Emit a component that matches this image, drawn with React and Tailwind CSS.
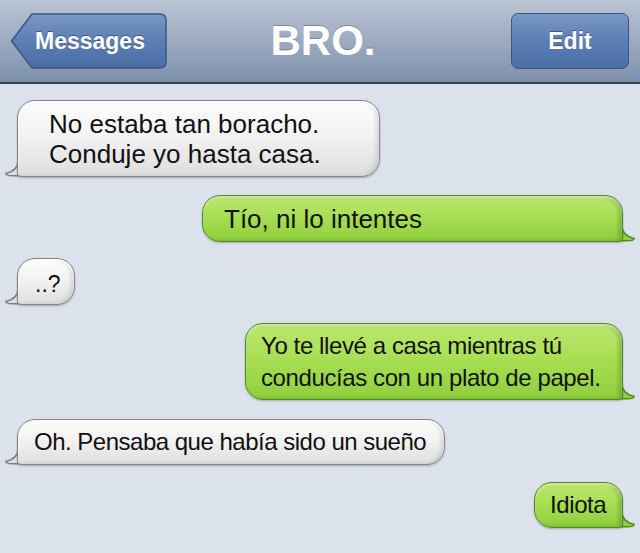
import React from 'react';

const messages = [
  { side: 'in', lines: ['No estaba tan boracho.', 'Conduje yo hasta casa.'], w: 'w-[363px] h-[77px] pl-[31px] text-[26px] leading-[30px]', mt: 'mt-[16px]' },
  { side: 'out', lines: ['Tío, ni lo intentes'], w: 'w-[421px] h-[47px] pl-[21px] text-[26px] leading-[30px]', mt: 'mt-[18px]' },
  { side: 'in', lines: ['..?'], w: 'w-[58px] h-[47px] pl-[17px] pt-[4px] text-[23px] leading-[30px]', mt: 'mt-[16px]' },
  { side: 'out', lines: ['Yo te llevé a casa mientras tú', 'conducías con un plato de papel.'], w: 'w-[378px] h-[77px] pl-[15px] text-[24px] leading-[32px] tracking-[-0.4px]', mt: 'mt-[18px]' },
  { side: 'in', lines: ['Oh. Pensaba que había sido un sueño'], w: 'w-[428px] h-[46px] pl-[16px] text-[24px] leading-[30px] tracking-[-0.5px]', mt: 'mt-[19px]' },
  { side: 'out', lines: ['Idiota'], w: 'w-[89px] h-[46px] pl-[15px] text-[24px] leading-[30px] tracking-[-0.4px]', mt: 'mt-[17px]' },
];

function Tail({ side }) {
  const green = side === 'out';
  return (
    <svg
      width="30"
      height="24"
      viewBox="0 0 30 24"
      className={green ? 'absolute right-[-12px] bottom-0 -scale-x-100' : 'absolute left-[-12px] bottom-0'}
    >
      <path
        d="M13 0 L13 8 C13 15 9 18.5 0.8 20.5 C1 22.5 4 23 9 22.8 C14 22.6 18 22 24 23 L30 23 L30 0 Z"
        fill={green ? '#8fcf3c' : '#dedede'}
        stroke={green ? '#4f8a25' : '#7f7f7f'}
        strokeWidth="1.5"
      />
    </svg>
  );
}

function Bubble({ msg }) {
  const green = msg.side === 'out';
  const skin = green
    ? 'rounded-[18px] rounded-br-[4px] border-[1.5px] border-[#4f8a25] bg-linear-to-b from-[#bde86f] via-[#a6dd51] to-[#8fcf3c] shadow-[inset_0_2px_2px_rgba(255,255,255,0.45),inset_-3px_0_4px_rgba(40,100,10,0.35),0_1px_2px_rgba(0,0,0,0.25)]'
    : 'rounded-[18px] rounded-bl-[4px] border-[1.5px] border-[#858585] bg-linear-to-b from-[#fdfdfd] via-[#f1f1f1] to-[#dedede] shadow-[inset_0_2px_2px_rgba(255,255,255,0.9),inset_-3px_0_4px_rgba(0,0,0,0.12),0_1px_2px_rgba(0,0,0,0.25)]';
  return (
    <div className={`flex ${green ? 'justify-end pr-[17px]' : 'justify-start pl-[17px]'} ${msg.mt}`}>
      <div className="relative">
        <Tail side={msg.side} />
        <div className={`relative flex flex-col justify-center text-[#111] ${skin} ${msg.w}`}>
          {msg.lines.map((l) => (
            <span key={l} className="whitespace-nowrap">{l}</span>
          ))}
        </div>
      </div>
    </div>
  );
}

export default function App() {
  return (
    <div className="w-[640px] h-[553px] overflow-hidden bg-[#dbe2eb] font-['Liberation_Sans',Arial,sans-serif]">
      <header className="h-[84px] flex items-center pl-[10px] pr-[11px] bg-linear-to-b from-[#bac4d3] via-[#9dabc0] to-[#7d90ab] border-b-2 border-[#37414f]">
        <div className="relative w-[157px] h-[56px]">
          <svg width="157" height="56" viewBox="0 0 157 56" className="absolute inset-0">
            <defs>
              <linearGradient id="btn" x1="0" y1="0" x2="0" y2="1">
                <stop offset="0" stopColor="#7a98c4" />
                <stop offset="0.5" stopColor="#5b7eb3" />
                <stop offset="1" stopColor="#4a6ea5" />
              </linearGradient>
            </defs>
            <path d="M22 1 L150 1 Q156 1 156 7 L156 49 Q156 55 150 55 L22 55 L1.5 28 Z" fill="url(#btn)" stroke="#3b5884" strokeWidth="1.5" />
          </svg>
          <span className="relative flex items-center h-full pl-[25px] text-white font-bold text-[23px] [text-shadow:0_-1px_0_rgba(0,0,0,0.35)]">
            Messages
          </span>
        </div>
        <div className="flex-1 flex justify-center pr-[32px]">
          <span className="text-white font-bold text-[42px] leading-none [text-shadow:0_-1px_0_rgba(0,0,0,0.25)]">BRO.</span>
        </div>
        <div className="w-[118px] h-[56px] flex items-center justify-center rounded-[7px] border-[1.5px] border-[#3b5884] bg-linear-to-b from-[#7a98c4] via-[#5b7eb3] to-[#4a6ea5] text-white font-bold text-[23px] [text-shadow:0_-1px_0_rgba(0,0,0,0.35)]">
          Edit
        </div>
      </header>
      <main className="flex flex-col">
        {messages.map((m, i) => (
          <Bubble key={i} msg={m} />
        ))}
      </main>
    </div>
  );
}
